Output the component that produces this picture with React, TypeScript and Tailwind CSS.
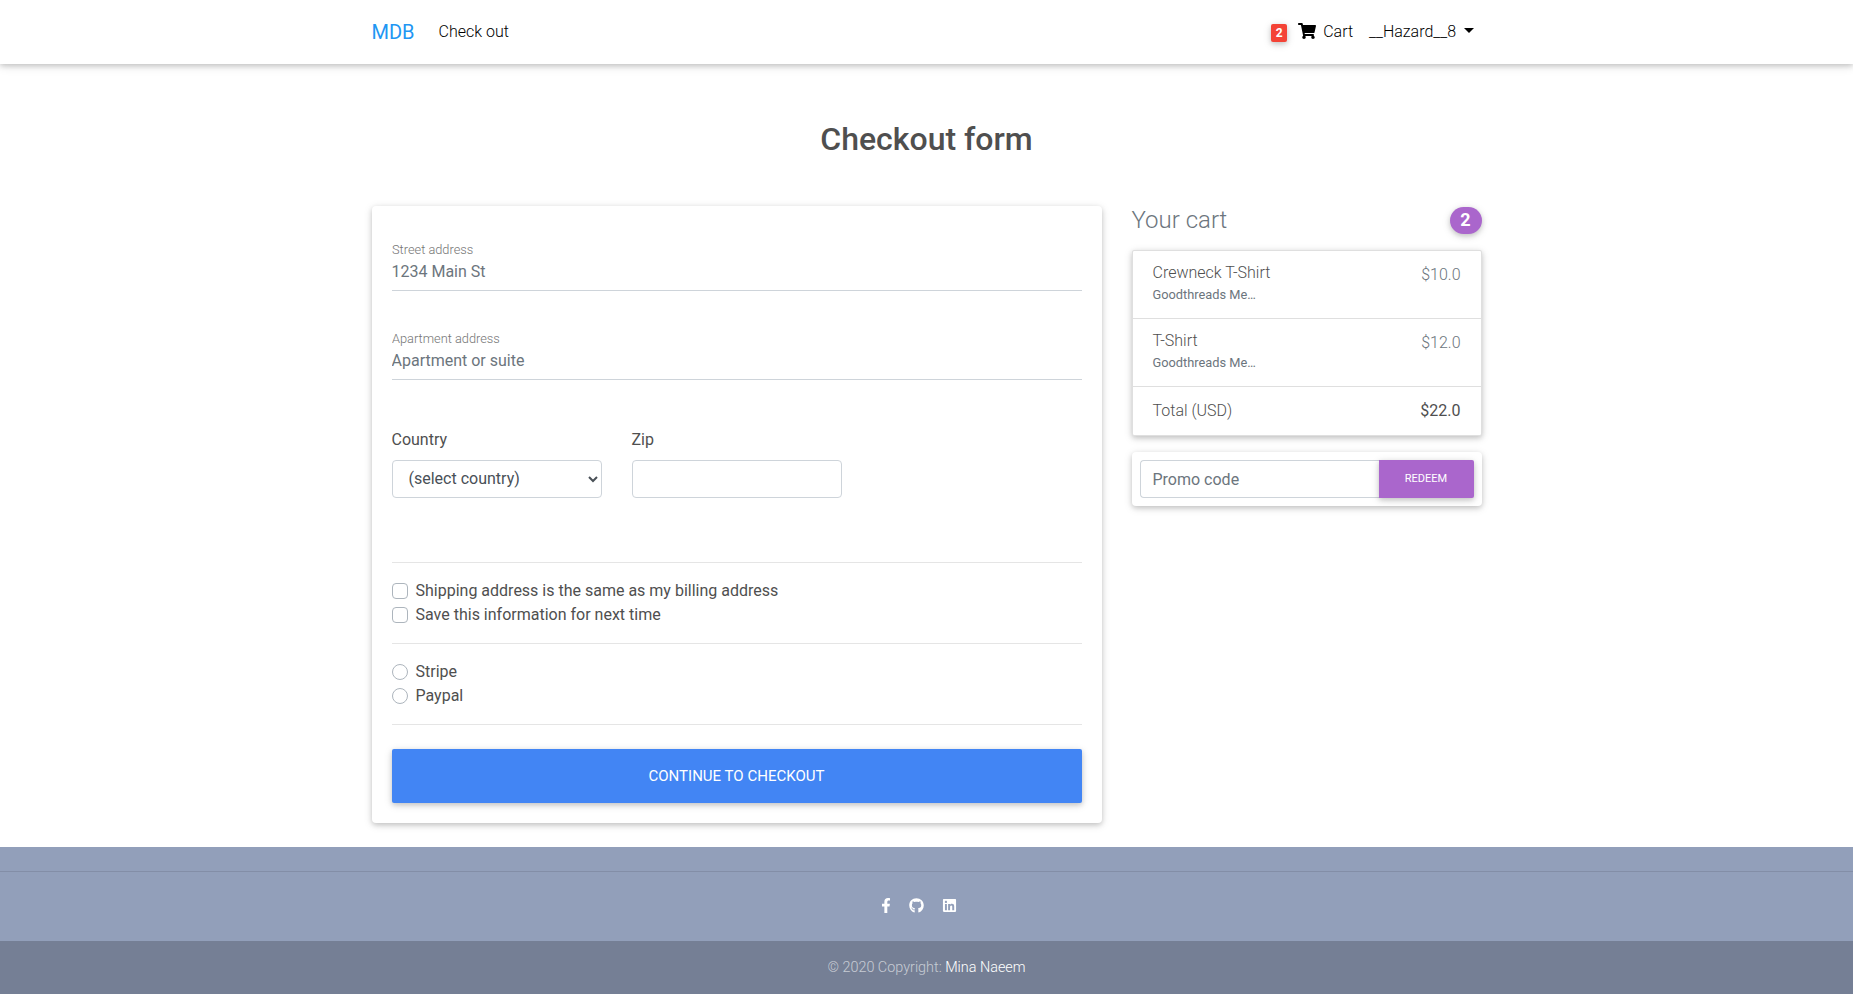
import type { ReactNode } from "react";
import { FaFacebookF, FaGithub, FaLinkedin, FaShoppingCart } from "react-icons/fa";

function LineField({ label, placeholder }: { label: string; placeholder: string }) {
  return (
    <div className="h-[89px]">
      <label className="block h-[19px] w-fit origin-top-left scale-80 text-base leading-6 font-light whitespace-nowrap text-[#757575]">
        {label}
      </label>
      <input
        type="text"
        placeholder={placeholder}
        className="block h-8 w-full border-b border-[#ced4da] pb-[7px] text-base leading-6 outline-none placeholder:text-[#6c757d]"
      />
    </div>
  );
}

function Option({ round, children }: { round?: boolean; children: ReactNode }) {
  return (
    <label className="flex h-6 items-center gap-2">
      <span
        className={
          round
            ? "mb-px size-4 rounded-full border border-[#adb5bd] bg-white"
            : "mb-px size-4 rounded border border-[#adb5bd] bg-white"
        }
      />
      <span>{children}</span>
    </label>
  );
}

function CartRow({ name, price }: { name: string; price: string }) {
  return (
    <li className="flex h-[68px] justify-between border-b border-[#dfdfdf] px-5 pt-3">
      <div>
        <h6 className="text-base leading-[19px] font-light">{name}</h6>
        <small className="block pt-[3px] text-[12.8px] leading-[19px] text-[#6c757d]">Goodthreads Me…</small>
      </div>
      <span className="leading-6 font-light text-[#6c757d]">{price}</span>
    </li>
  );
}

export default function App() {
  return (
    <div className="flex min-h-[994px] flex-col bg-white font-[Roboto,sans-serif] text-base leading-6 text-[#495057]">
      <nav className="h-16 shrink-0 bg-white font-light text-black shadow-[0_2px_5px_0_rgba(0,0,0,0.16),0_2px_10px_0_rgba(0,0,0,0.12)]">
        <div className="mx-auto flex h-full w-[1110px] items-center">
          <a className="text-xl leading-[30px] font-normal text-[#2196f3]">MDB</a>
          <a className="ml-6">Check out</a>
          <div className="ml-auto flex items-center pr-[7.5px]">
            <span className="mt-0.5 flex h-[18px] w-4 items-center justify-center rounded-xs bg-[#f44336] text-xs leading-3 font-bold text-white shadow-[0_2px_5px_0_rgba(0,0,0,0.16),0_2px_10px_0_rgba(0,0,0,0.12)]">
              2
            </span>
            <FaShoppingCart className="mr-[7px] mb-0.5 ml-[11px] h-4 w-[18px]" />
            <span>Cart</span>
            <span className="ml-4">__Hazard__8</span>
            <span className="mb-[3px] ml-2 border-x-5 border-t-5 border-x-transparent border-t-black" />
          </div>
        </div>
      </nav>

      <main className="mx-auto w-[1110px]">
        <h2 className="mt-14 text-center text-[32px] leading-[38px] font-medium text-[#4f4f4f]">Checkout form</h2>
        <div className="mt-12 flex items-start gap-[30px]">
          <form className="h-[617px] w-[730px] rounded bg-white px-5 pt-[34px] shadow-[0_2px_5px_0_rgba(0,0,0,0.16),0_2px_10px_0_rgba(0,0,0,0.12)]">
            <LineField label="Street address" placeholder="1234 Main St" />
            <LineField label="Apartment address" placeholder="Apartment or suite" />
            <div className="mt-[9px] flex gap-[30px] text-[#4f4f4f]">
              <div className="w-[210px]">
                <label className="mb-2 block pt-px leading-6">Country</label>
                <select className="block h-[38px] w-full rounded border border-[#ced4da] bg-white px-3 pb-px text-[#495057]">
                  <option>(select country)</option>
                </select>
              </div>
              <div className="w-[210px]">
                <label className="mb-2 block pt-px leading-6">Zip</label>
                <input type="text" className="block h-[38px] w-full rounded border border-[#ced4da] px-3" />
              </div>
            </div>
            <hr className="mt-16 mb-4 border-black/10" />
            <div className="text-[#4f4f4f]">
              <Option>Shipping address is the same as my billing address</Option>
              <Option>Save this information for next time</Option>
              <hr className="my-4 border-black/10" />
              <Option round>Stripe</Option>
              <Option round>Paypal</Option>
              <hr className="mt-4 mb-6 border-black/10" />
            </div>
            <button
              type="button"
              className="block h-[54px] w-full rounded-xs bg-[#4285f4] text-[15.04px] text-white uppercase shadow-[0_2px_5px_0_rgba(0,0,0,0.16),0_2px_10px_0_rgba(0,0,0,0.12)]"
            >
              Continue to checkout
            </button>
          </form>

          <aside className="w-[350px]">
            <div className="flex h-11 items-start justify-between">
              <span className="text-2xl leading-[29px] font-light text-[#6c757d]">Your cart</span>
              <span className="mt-px flex h-[27px] w-8 items-center justify-center rounded-full bg-[#a6c] pb-px text-lg leading-[18px] font-bold text-white shadow-[0_2px_5px_0_rgba(0,0,0,0.16),0_2px_10px_0_rgba(0,0,0,0.12)]">
                2
              </span>
            </div>
            <ul className="rounded-xs border border-[#dfdfdf] bg-white text-[#4f4f4f] shadow-[0_2px_5px_0_rgba(0,0,0,0.16),0_2px_10px_0_rgba(0,0,0,0.12)]">
              <CartRow name="Crewneck T-Shirt" price="$10.0" />
              <CartRow name="T-Shirt" price="$12.0" />
              <li className="flex h-12 items-center justify-between px-5">
                <span className="font-light">Total (USD)</span>
                <span>$22.0</span>
              </li>
            </ul>
            <form className="mt-4 flex rounded bg-white p-2 shadow-[0_2px_5px_0_rgba(0,0,0,0.16),0_2px_10px_0_rgba(0,0,0,0.12)]">
              <input
                type="text"
                placeholder="Promo code"
                className="h-[38px] min-w-0 flex-1 rounded-l border border-r-0 border-[#ced4da] px-3 outline-none placeholder:text-[#6c757d]"
              />
              <button
                type="button"
                className="h-[38px] w-[95px] rounded-r-xs bg-[#a6c] text-[11px] text-white uppercase shadow-[0_2px_5px_0_rgba(0,0,0,0.16),0_2px_10px_0_rgba(0,0,0,0.12)]"
              >
                Redeem
              </button>
            </form>
          </aside>
        </div>
      </main>

      <footer className="mt-6 bg-[#929fba] text-white">
        <div className="h-[94px] pt-6">
          <hr className="border-black/10" />
          <div className="mt-[25px] flex h-4 items-center justify-center pr-[15px]">
            <FaFacebookF className="mr-[18.5px] h-[15px] w-[10px]" />
            <FaGithub className="mr-[18px] size-[15px]" />
            <FaLinkedin className="size-[15px]" />
          </div>
        </div>
        <div className="h-[53px] bg-[#757f95] pt-4 text-center text-[14.4px] leading-[22px] font-light text-white/60">
          © 2020 Copyright: <a className="text-white">Mina Naeem</a>
        </div>
      </footer>
    </div>
  );
}
